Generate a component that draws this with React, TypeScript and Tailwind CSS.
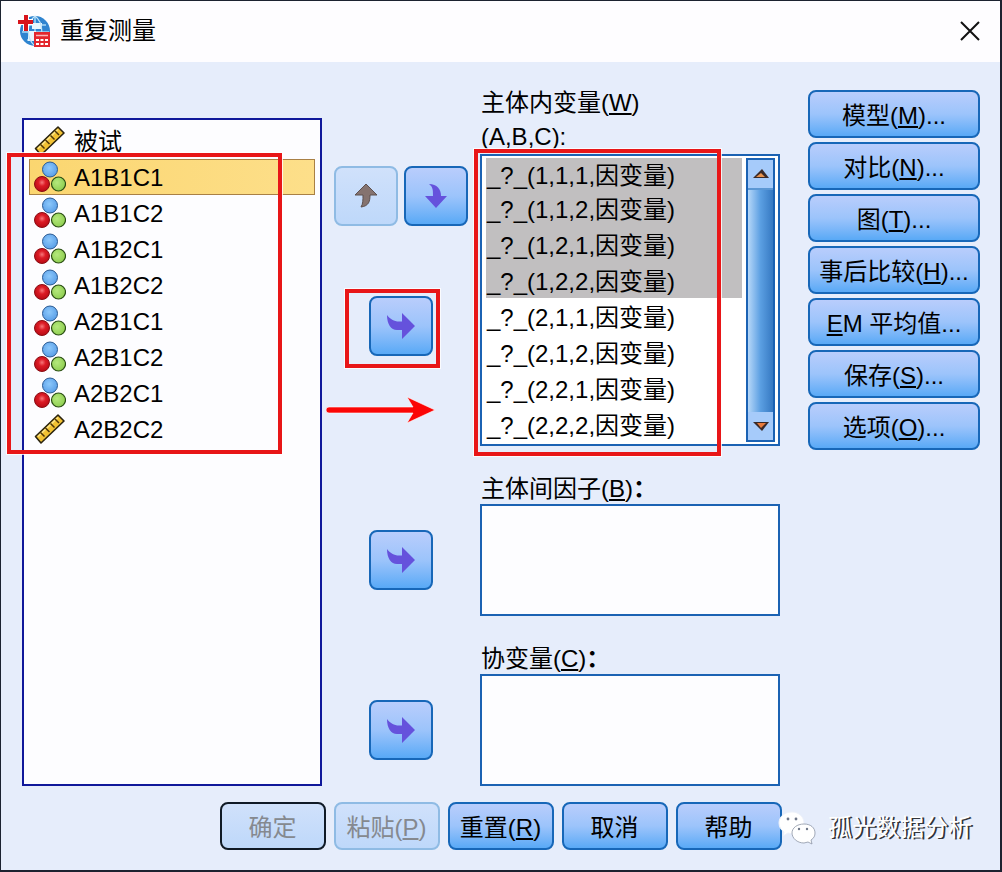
import { useState, type ReactNode } from "react";
import clsx from "clsx";

interface IVariable {
	name: string;
	type: "scale" | "nominal";
}

const VARIABLES: IVariable[] = [
	{ name: "被试", type: "scale" },
	{ name: "A1B1C1", type: "nominal" },
	{ name: "A1B1C2", type: "nominal" },
	{ name: "A1B2C1", type: "nominal" },
	{ name: "A1B2C2", type: "nominal" },
	{ name: "A2B1C1", type: "nominal" },
	{ name: "A2B1C2", type: "nominal" },
	{ name: "A2B2C1", type: "nominal" },
	{ name: "A2B2C2", type: "scale" },
];

const CELLS = [
	"1,1,1",
	"1,1,2",
	"1,2,1",
	"1,2,2",
	"2,1,1",
	"2,1,2",
	"2,2,1",
	"2,2,2",
];

const ScaleIcon = () => (
	<svg viewBox="0 0 32 32" className="size-8 shrink-0" aria-hidden="true">
		<path
			d="M1.500 23.500 24 2l6 6L7 30Z"
			fill="#f2c233"
			stroke="#2b2410"
			strokeWidth="1.6"
			strokeLinejoin="round"
		/>
		<path d="M4 23.500 24 4.500" stroke="#fbe488" strokeWidth="1.5" />
		<path
			d="m6.500 19.500 4 4M11.500 15l4 4M16.500 10.500l4 4M21 6l4 4"
			stroke="#4d3508"
			strokeWidth="1.500"
		/>
	</svg>
);

const NominalIcon = () => (
	<svg viewBox="0 0 32 32" className="size-8 shrink-0" aria-hidden="true">
		<defs>
			<radialGradient id="ballBlue" cx=".45" cy=".4" r=".6">
				<stop offset="0" stopColor="#8cc8fb" />
				<stop offset="1" stopColor="#5a9fe8" />
			</radialGradient>
			<radialGradient id="ballRed" cx=".5" cy=".4" r=".6">
				<stop offset="0" stopColor="#f7777a" />
				<stop offset=".4" stopColor="#dc1c26" />
				<stop offset="1" stopColor="#b80a14" />
			</radialGradient>
			<radialGradient id="ballGreen" cx=".4" cy=".4" r=".6">
				<stop offset="0" stopColor="#b4e87c" />
				<stop offset="1" stopColor="#90cf52" />
			</radialGradient>
		</defs>
		<circle cx="16" cy="8.500" r="7.500" fill="url(#ballBlue)" stroke="#2a5a92" />
		<circle cx="24.500" cy="23" r="7" fill="url(#ballGreen)" stroke="#2b4f14" strokeWidth="1.200" />
		<circle cx="8" cy="23" r="7.500" fill="url(#ballRed)" stroke="#8a0d14" />
	</svg>
);

const AppIcon = () => (
	<svg viewBox="0 0 32 32" className="size-8" aria-hidden="true">
		<circle cx="17" cy="16" r="15" fill="#2f84d0" />
		<path d="M5 10h23M4 17h27M9 25h20M17 1v30" stroke="#a9d8f5" strokeWidth="1.500" />
		<path d="M14 8h10v6H14zM10 16h8v10h-8z" fill="#e9f5fd" />
		<path d="M17 1c-9 7-9 22 0 30M17 1c9 7 9 22 0 30" fill="none" stroke="#bfe3f8" strokeWidth="1.200" />
		<path d="M8 0v16M1 7h14" stroke="#fff" strokeWidth="6" />
		<path d="M8 0v16M0 7h15" stroke="#d8141c" strokeWidth="4" />
		<path d="M16 17h16v15H16z" fill="#e3262d" />
		<path d="M18 20.500h12" stroke="#f9b6b8" strokeWidth="1.500" />
		<path
			d="M18 24h3v2h-3zM22.500 24h3v2h-3zM27 24h3v2h-3zM18 28h3v2h-3zM22.500 28h3v2h-3zM27 28h3v2h-3z"
			fill="#fff"
		/>
	</svg>
);

const ChatIcon = () => (
	<svg viewBox="0 0 38 34" className="h-[34px] w-[38px]" aria-hidden="true">
		<path
			d="M14 1C6 1 1 6 1 12c0 4 2 7 5 9l-1 4 5-3 4 1c7 0 12-5 12-11S21 1 14 1Z"
			fill="#fff"
			stroke="#eef2fa"
		/>
		<path
			d="M26 13c-7 0-12 4-12 9s5 10 12 10l4-1 4 2-1-4c3-2 4-4 4-7 0-5-4-9-11-9Z"
			fill="#fff"
			stroke="#8c94a4"
			strokeWidth=".8"
		/>
		<g fill="#6d7688">
			<circle cx="10" cy="8" r="1.400" />
			<circle cx="18" cy="8" r="1.400" />
			<circle cx="21" cy="18" r="1.200" />
			<circle cx="29" cy="18" r="1.200" />
		</g>
	</svg>
);

const UpArrow = () => (
	<svg viewBox="0 0 24 26" className="h-[26px] w-6" aria-hidden="true">
		<path
			d="M12 1 23 12h-7c0 6-1 11-9 12 2-3 2-7 2-12H1Z"
			fill="#85736f"
			stroke="#5d504f"
		/>
	</svg>
);

const DownArrow = () => (
	<svg viewBox="0 0 24 26" className="h-[26px] w-6" aria-hidden="true">
		<path d="M12 25 23 13h-6C17 6 13 1 5 1c4 3 4 6 4 12H1Z" fill="#6552dc" />
	</svg>
);

const RightArrow = () => (
	<svg viewBox="0 0 28 28" className="size-7" aria-hidden="true">
		<path d="M28 14 15 1v8.500h-3C7 9.500 3 7 0 3c0 9 4 15 10 15h5v9Z" fill="#6552dc" />
	</svg>
);

interface IButtonProps {
	label?: string;
	className?: string;
	disabled?: boolean;
	children: ReactNode;
}

const Button = ({ label, className, disabled, children }: IButtonProps) => (
	<button
		type="button"
		aria-label={label}
		disabled={disabled}
		className={clsx(
			"flex items-center justify-center rounded-lg border-2 bg-linear-to-b",
			disabled
				? "from-[#d0e1fb] to-[#bed8fa] text-[#85898f]"
				: "border-[#1767b8] from-[#b9cdfc] via-[#9cc4fb] to-[#58a9f6] text-black",
			className,
		)}
	>
		{children}
	</button>
);

const MoveButton = ({ label }: { label: string }) => (
	<Button label={label} className="h-[60px] w-16">
		<RightArrow />
	</Button>
);

const Highlight = ({ className }: { className: string }) => (
	<div
		className={clsx(
			"pointer-events-none absolute border-4 border-[#e81618] outline-1 outline-white/80",
			className,
		)}
	/>
);

const VariableList = () => {
	const [selected, setSelected] = useState("A1B1C1");

	return (
		<div className="relative flex-1 border-2 border-[#10189a] bg-[#fdfdff] px-[5px] py-[3px]">
			<ul role="listbox" aria-label="变量">
				{VARIABLES.map(({ name, type }) => (
					<li
						key={name}
						role="option"
						aria-selected={name === selected}
						onClick={() => setSelected(name)}
						className={clsx(
							"flex h-9 items-center gap-2 border px-1",
							name === selected
								? "border-[#a98045] bg-linear-to-r from-[#fbd670] to-[#fddf8a]"
								: "border-transparent",
						)}
					>
						{type === "scale" ? <ScaleIcon /> : <NominalIcon />}
						<span className="pt-[2px]">{name}</span>
					</li>
				))}
			</ul>
			<Highlight className="-left-[17px] top-[33px] h-[301px] w-[275px]" />
		</div>
	);
};

const WithinList = () => (
	<div className="relative border-2 border-[#1b62b3] bg-white p-[2px] pr-[3px]">
		<div className="flex h-[284px] gap-1">
			<ul
				role="listbox"
				aria-labelledby="within-label"
				aria-multiselectable="true"
				className="min-w-0 flex-1 overflow-hidden pl-[2px]"
			>
				{CELLS.map((cell, i) => (
					<li
						key={cell}
						role="option"
						aria-selected={i < 4}
						className={clsx(
							"flex h-9 items-center px-px pt-1 whitespace-nowrap first:h-8",
							i < 4 && "bg-[#c1bfc0]",
						)}
					>
						_?_({cell},因变量)
					</li>
				))}
			</ul>
			<div className="flex w-[29px] flex-col border-2 border-[#1b62b3] bg-linear-to-r from-[#b5d7f8] via-[#5b9fe2] to-[#3679c2]">
				<button
					type="button"
					aria-label="向上滚动"
					className="flex h-[30px] items-center justify-center border-b-2 border-[#5c97d4] bg-[#a6cbfa]"
				>
					<svg viewBox="0 0 16 10" className="h-[10px] w-4" aria-hidden="true">
						<path d="m9 0 7 9H0Z" fill="#3a2a28" />
						<path d="m8 4 4 4H3Z" fill="#e8924c" />
					</svg>
				</button>
				<div className="flex-1" />
				<button
					type="button"
					aria-label="向下滚动"
					className="flex h-7 items-center justify-center bg-[#a6cbfa]"
				>
					<svg viewBox="0 0 16 10" className="h-[10px] w-4" aria-hidden="true">
						<path d="M0 1h16L9 10Z" fill="#3a2a28" />
						<path d="M4 2h9L8 7Z" fill="#e87b3c" />
					</svg>
				</button>
			</div>
		</div>
		<Highlight className="-left-[8px] -top-[7px] h-[307px] w-[247px]" />
	</div>
);

interface ITargetProps {
	id: string;
	label: ReactNode;
	move: string;
}

const Target = ({ id, label, move }: ITargetProps) => (
	<div className="flex">
		<div className="flex w-[158px] items-center justify-center pt-[34px]">
			<MoveButton label={move} />
		</div>
		<div className="min-w-0 flex-1">
			<div id={id} className="h-[34px] pl-px leading-[38px]">
				{label}
				<b>：</b>
			</div>
			<ul
				role="listbox"
				aria-labelledby={id}
				className="h-28 border-2 border-[#1b62b3] bg-[#fdfdff]"
			/>
		</div>
	</div>
);

export default function App() {
	return (
		<main className="relative border-t border-r-2 border-b-2 border-l border-[#1c2230] bg-[#e6edfb] font-['Liberation_Sans','Noto_Sans_CJK_SC',sans-serif] text-2xl leading-8 text-black">
			<header className="flex h-[61px] items-center justify-between bg-[#fefdff] pr-5 pb-px pl-[17px]">
				<div className="flex items-center gap-[10px]">
					<AppIcon />
					<h1>重复测量</h1>
				</div>
				<button type="button" aria-label="关闭">
					<svg viewBox="0 0 20 20" className="size-5" aria-hidden="true">
						<path d="m1 1 18 18M19 1 1 19" stroke="#111" strokeWidth="2" />
					</svg>
				</button>
			</header>

			<div className="flex pr-5 pl-[21px]">
				<div className="flex min-w-0 flex-1 pt-14">
					<VariableList />
				</div>

				<div className="flex min-w-0 flex-[1.527] flex-col gap-6 pt-6">
					<div className="flex">
						<div className="flex w-[158px] flex-col items-center pt-20">
							<div className="flex gap-[6px]">
								<Button label="上移" disabled className="h-[60px] w-16 border-[#8fbbe4]">
									<UpArrow />
								</Button>
								<Button label="下移" className="h-[60px] w-16">
									<DownArrow />
								</Button>
							</div>
							<div className="relative mt-[70px]">
								<MoveButton label="移入主体内变量" />
								<Highlight className="-left-[24px] -top-[7px] h-[79px] w-[95px]" />
							</div>
							<svg
								viewBox="0 0 110 28"
								className="mt-10 mr-11 h-7 w-[110px] self-end"
								aria-hidden="true"
							>
								<path
									d="M3 11h84L81 1l28 13-28 13 6-10H3a2 2 0 0 1 0-6Z"
									fill="#fb0606"
									stroke="#fff"
									strokeOpacity=".6"
									strokeWidth="1"
								/>
							</svg>
						</div>
						<div className="min-w-0 flex-1">
							<div id="within-label" className="pl-px leading-[34px]">
								主体内变量(<u>W</u>)<br />
								(A,B,C):
							</div>
							<WithinList />
						</div>
					</div>
					<Target
						id="between-label"
						move="移入主体间因子"
						label={
							<>
								主体间因子(<u>B</u>)
							</>
						}
					/>
					<Target
						id="covariate-label"
						move="移入协变量"
						label={
							<>
								协变量(<u>C</u>)
							</>
						}
					/>
				</div>

				<div className="ml-7 flex w-[172px] flex-col gap-1 pt-7">
					<Button className="h-12 pt-1">
						<span>模型(<u>M</u>)...</span>
					</Button>
					<Button className="h-12 pt-1">
						<span>对比(<u>N</u>)...</span>
					</Button>
					<Button className="h-12 pt-1">
						<span>图(<u>T</u>)...</span>
					</Button>
					<Button className="h-12 pt-1">
						<span>事后比较(<u>H</u>)...</span>
					</Button>
					<Button className="h-12 pt-1">
						<span><u>E</u>M 平均值...</span>
					</Button>
					<Button className="h-12 pt-1">
						<span>保存(<u>S</u>)...</span>
					</Button>
					<Button className="h-12 pt-1">
						<span>选项(<u>O</u>)...</span>
					</Button>
				</div>
			</div>

			<footer className="flex justify-center gap-2 pt-4 pb-5">
				<Button disabled className="h-12 w-[106px] border-[#101a26] pt-1">
					确定
				</Button>
				<Button disabled className="h-12 w-[106px] border-[#8fbbe4] pt-1">
					<span>粘贴(<u>P</u>)</span>
				</Button>
				<Button className="h-12 w-[106px] pt-1">
					<span>重置(<u>R</u>)</span>
				</Button>
				<Button className="h-12 w-[106px] pt-1">取消</Button>
				<Button className="h-12 w-[106px] pt-1">帮助</Button>
			</footer>

			<div className="absolute right-7 bottom-[25px] flex items-center gap-3">
				<ChatIcon />
				<span className="text-white [text-shadow:2px_1px_0_#33363c]">孤光数据分析</span>
			</div>
		</main>
	);
}
